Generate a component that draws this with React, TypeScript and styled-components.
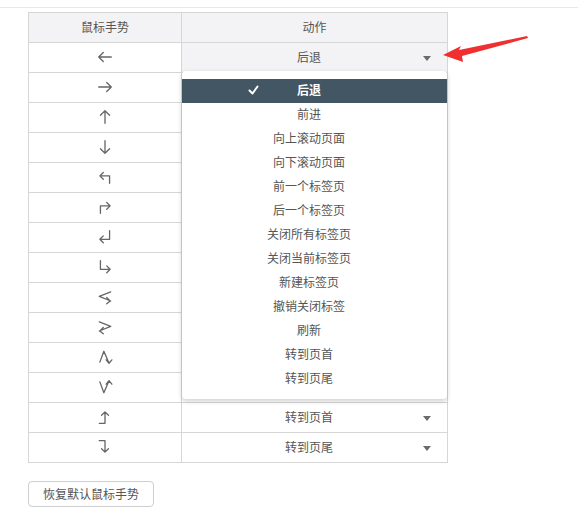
import React from 'react';
import styled, { createGlobalStyle } from 'styled-components';

const GlobalStyle = createGlobalStyle`
  html, body {
    margin: 0;
    padding: 0;
    background: #fff;
    font-family: "Noto Sans CJK SC", "Noto Sans", sans-serif;
    font-size: 12px;
    color: #555;
  }
`

const Page = styled.div`
  position: relative;
  margin-top: 7px;
  border-top: 1px solid #e8e8e8;
  padding: 4px 0 0 28px;
  height: 524px;
  box-sizing: border-box;
`

const TableWrap = styled.div`
  position: relative;
  width: 420px;
`

const Grid = styled.div`
  display: grid;
  grid-template-columns: 153px 266px;
  border-top: 1px solid #d6d6d6;
  border-left: 1px solid #d6d6d6;
`

const Cell = styled.div<{ $head?: boolean; $hover?: boolean }>`
  height: 30px;
  box-sizing: border-box;
  border-right: 1px solid #d6d6d6;
  border-bottom: 1px solid #d6d6d6;
  padding-bottom: 2px;
  display: flex;
  align-items: center;
  justify-content: center;
  background: ${p => (p.$head || p.$hover ? '#f3f3f5' : '#fff')};
  color: #555;
  line-height: 1;
`

const Select = styled.div`
  position: relative;
  width: 100%;
  height: 100%;
  display: flex;
  align-items: center;
  justify-content: center;
  padding-right: 11px;
  box-sizing: border-box;
`

const Caret = styled.span`
  position: absolute;
  right: 16px;
  top: 50%;
  margin-top: -1px;
  width: 0;
  height: 0;
  border-left: 4px solid transparent;
  border-right: 4px solid transparent;
  border-top: 5px solid #6b6b6b;
`

const Menu = styled.div`
  position: absolute;
  left: 154px;
  top: 59px;
  width: 265px;
  box-sizing: border-box;
  padding: 8px 0;
  background: #fff;
  border-radius: 4px;
  box-shadow: 0 2px 5px rgba(0, 0, 0, 0.2);
  z-index: 3;
`

const MenuItem = styled.div<{ $active?: boolean }>`
  position: relative;
  height: 24px;
  box-sizing: border-box;
  padding: 0 11px 2px 0;
  display: flex;
  align-items: center;
  justify-content: center;
  line-height: 1;
  background: ${p => (p.$active ? '#435664' : 'transparent')};
  color: ${p => (p.$active ? '#fff' : '#555')};
  font-weight: ${p => (p.$active ? 700 : 400)};
`

const Check = styled.svg`
  position: absolute;
  left: 66px;
  top: 6px;
`

const ResetButton = styled.button`
  margin-top: 18px;
  width: 126px;
  height: 26px;
  border: 1px solid #cfcfcf;
  border-radius: 4px;
  background: #fff;
  color: #555;
  font-family: inherit;
  font-size: 12px;
  padding: 0 0 2px;
  cursor: pointer;
`

const Annotation = styled.svg`
  position: absolute;
  left: 0;
  top: -8px;
  pointer-events: none;
`

const Icon = ({ d }: { d: string }) => (
  <svg width="16" height="16" viewBox="0 0 14 14" fill="none" stroke="#666" strokeWidth="1.15" strokeLinecap="round" strokeLinejoin="round">
    <path d={d} />
  </svg>
)

const gestures: { d: string; action: string }[] = [
  { d: 'M12.5 7H1.5M5.5 3L1.5 7l4 4', action: '后退' },
  { d: 'M1.5 7h11M8.5 3l4 4-4 4', action: '前进' },
  { d: 'M7 12.5V1.5M3 5.5l4-4 4 4', action: '向上滚动页面' },
  { d: 'M7 1.5v11M3 8.5l4 4 4-4', action: '向下滚动页面' },
  { d: 'M11 12.5V6H2.5M5.5 3L2.5 6l3 3', action: '前一个标签页' },
  { d: 'M3 12.5V6h8.5M8.5 3l3 3-3 3', action: '后一个标签页' },
  { d: 'M11 1.5V9H2.5M5.5 6L2.5 9l3 3', action: '关闭所有标签页' },
  { d: 'M3 1.5V9h8.5M8.5 6l3 3-3 3', action: '关闭当前标签页' },
  { d: 'M12 2.5L2 6.5l10 4M8.5 7.5l3 3-3 2.5', action: '新建标签页' },
  { d: 'M2 2.5l10 4-10 4M5.5 7.5l-3 3 3 2.5', action: '撤销关闭标签' },
  { d: 'M2.5 11.5L6 2l4.5 10.5M8 9.5l2.5 3 2.5-3', action: '刷新' },
  { d: 'M2.5 2.5L6 12l4.5-10.5M8 4.5l2.5-3 2.5 3', action: '转到页首' },
  { d: 'M2 12.5h5v-10M4 5.5l3-3 3 3', action: '转到页首' },
  { d: 'M2 1.5h5v10M4 8.5l3 3 3-3', action: '转到页尾' },
]

const menuItems = [
  '后退', '前进', '向上滚动页面', '向下滚动页面', '前一个标签页', '后一个标签页',
  '关闭所有标签页', '关闭当前标签页', '新建标签页', '撤销关闭标签', '刷新', '转到页首', '转到页尾',
]

export default function App() {
  return (
    <>
      <GlobalStyle />
      <Page>
        <TableWrap>
          <Grid>
            <Cell $head>鼠标手势</Cell>
            <Cell $head>动作</Cell>
            {gestures.map((g, i) => (
              <React.Fragment key={i}>
                <Cell><Icon d={g.d} /></Cell>
                <Cell $hover={i === 0}>
                  <Select>
                    {g.action}
                    <Caret />
                  </Select>
                </Cell>
              </React.Fragment>
            ))}
          </Grid>
          <Menu>
            {menuItems.map((m, i) => (
              <MenuItem key={m} $active={i === 0}>
                {i === 0 && (
                  <Check width="11" height="10" viewBox="0 0 11 10" fill="none" stroke="#fff" strokeWidth="2" strokeLinecap="round" strokeLinejoin="round">
                    <path d="M1.5 5.5l3 3 5-7" />
                  </Check>
                )}
                {m}
              </MenuItem>
            ))}
          </Menu>
        </TableWrap>
        <ResetButton>恢复默认鼠标手势</ResetButton>
        <Annotation width="578" height="80" viewBox="0 0 578 80">
          <polygon points="443,55 461,46 459,50 527,36 528,38 462,56 463,62" fill="#f03030" />
        </Annotation>
      </Page>
    </>
  )
}
